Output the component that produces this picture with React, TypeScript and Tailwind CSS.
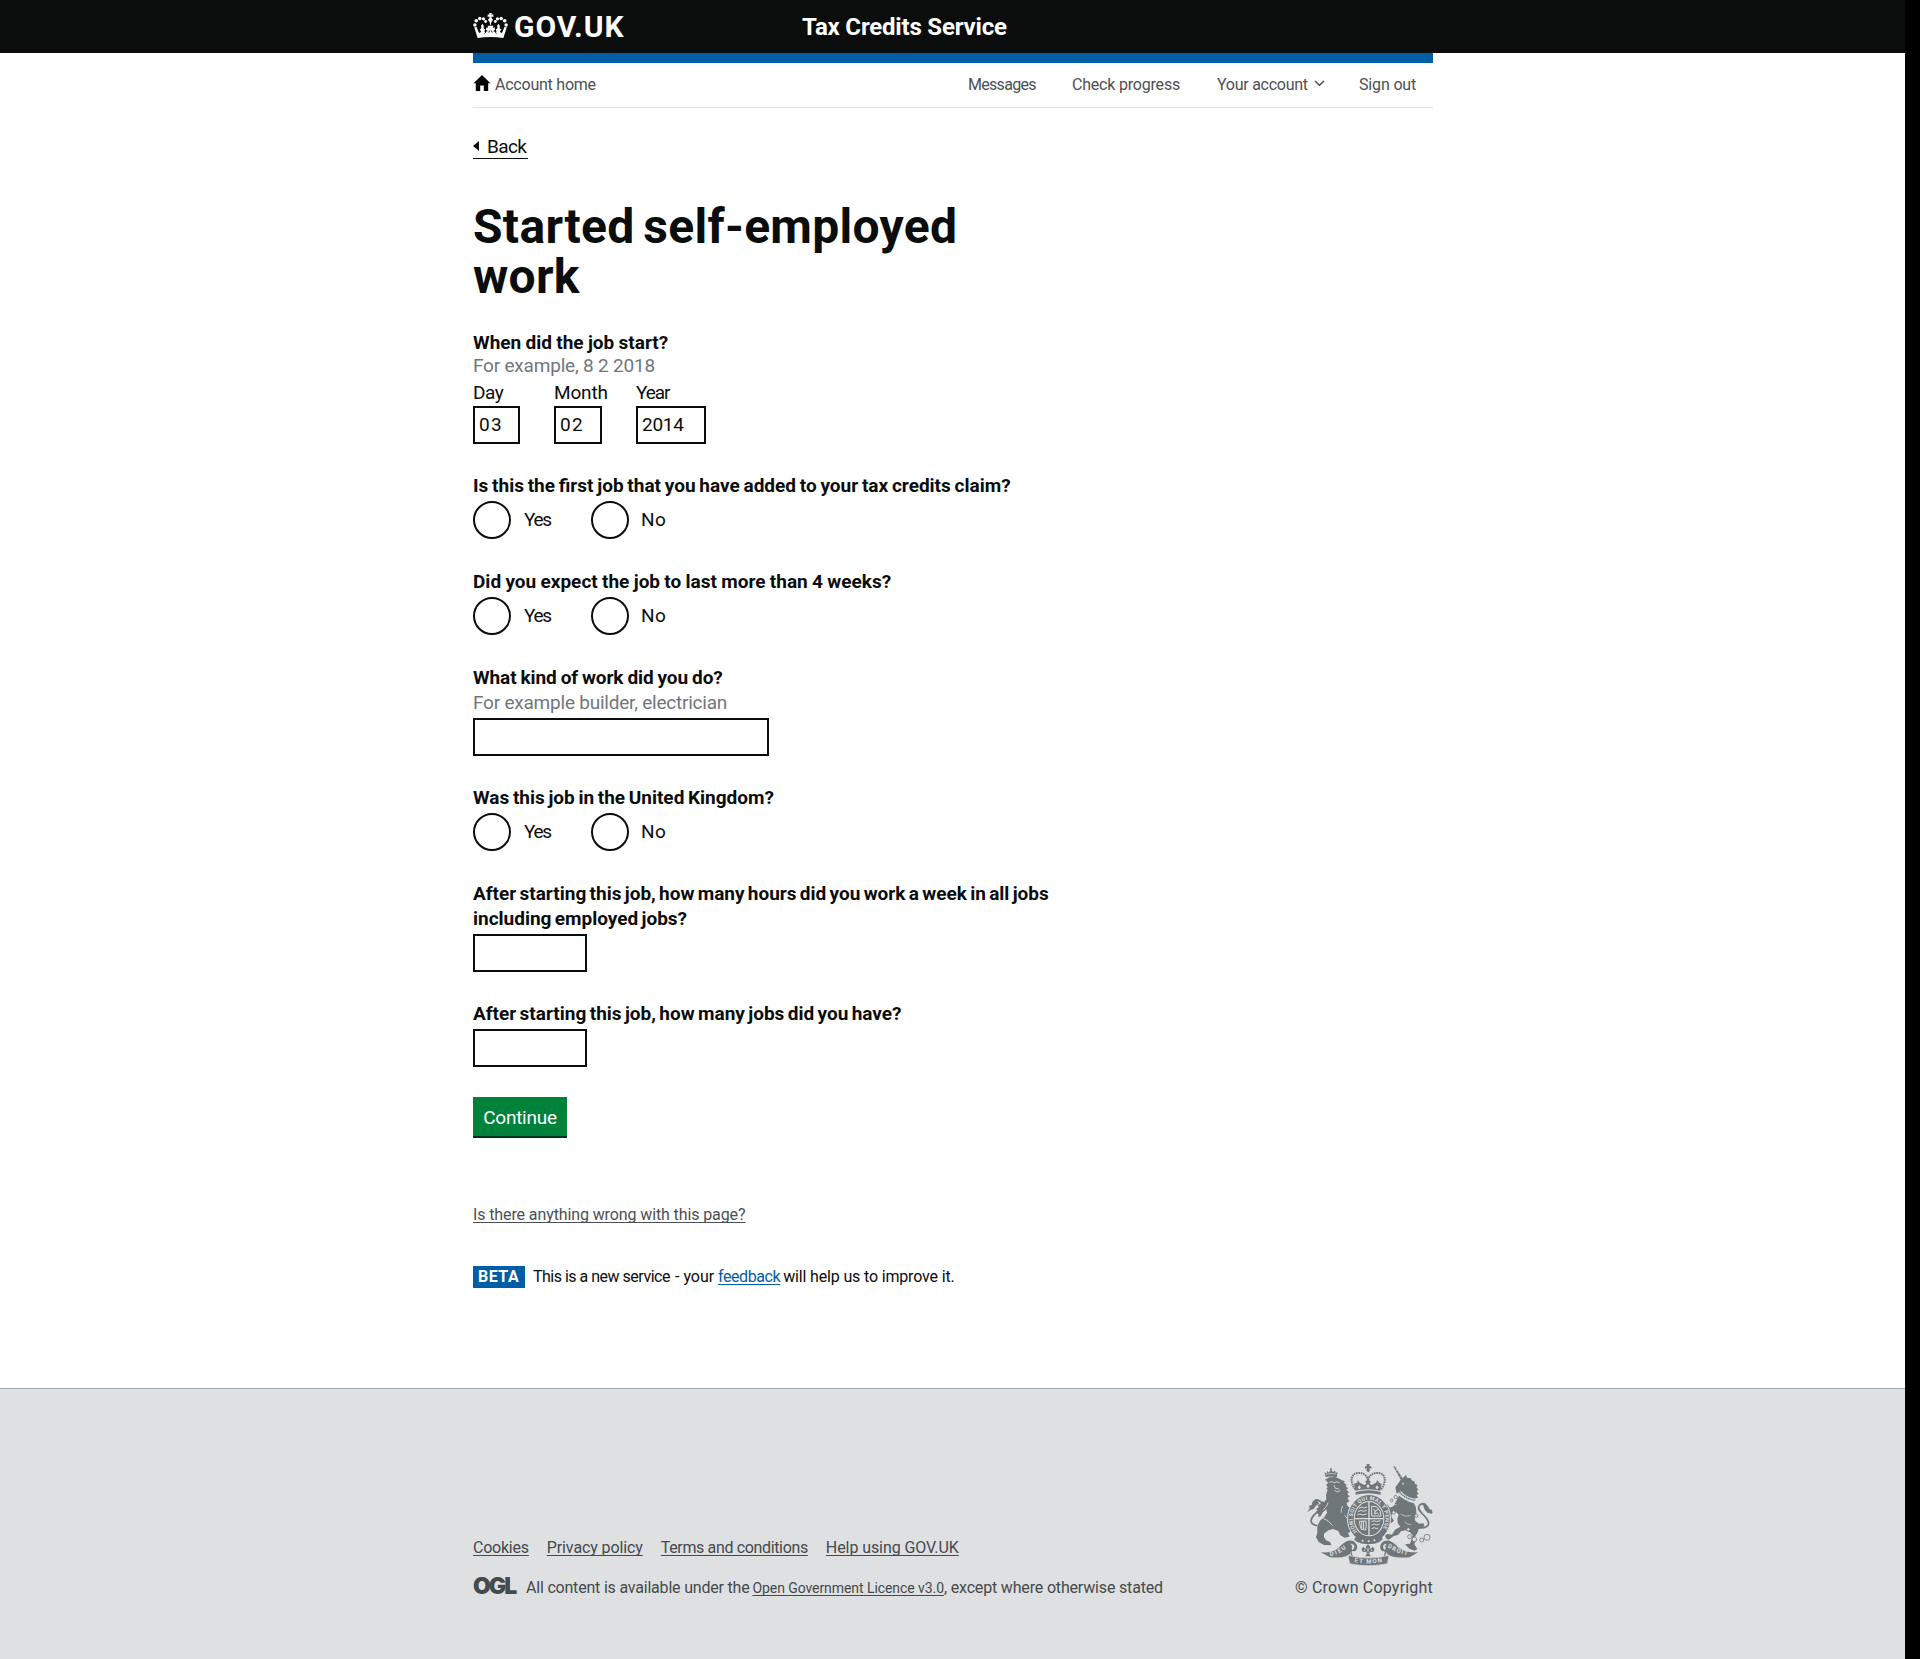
import type { ReactNode } from 'react';

function HeaderCrown() {
  return (
    <svg className="mt-[13px] h-[25px] w-[35px] shrink-0" viewBox="0 0 34 25" preserveAspectRatio="none" fill="#fff">
      <path d="M15.7 0h2.6l-.5 1.7 1.9-.5v2.7l-1.9-.5.4 1.8 1.3 1.5-1.7 2.6-.8 3.6-.8-3.6-1.7-2.6 1.3-1.5.4-1.8-1.9.5V1.2l1.9.5z" />
      <circle cx="1.8" cy="12" r="1.7" />
      <circle cx="3.2" cy="7.8" r="1.8" />
      <circle cx="6.6" cy="5.5" r="1.7" />
      <circle cx="10.2" cy="5.8" r="1.6" />
      <circle cx="12.3" cy="8.5" r="1.4" />
      <circle cx="32.2" cy="12" r="1.7" />
      <circle cx="30.8" cy="7.8" r="1.8" />
      <circle cx="27.4" cy="5.5" r="1.7" />
      <circle cx="23.8" cy="5.8" r="1.6" />
      <circle cx="21.7" cy="8.5" r="1.4" />
      <path d="M1.200 14.200l2.300-.2 2.300 6.100 2.200-1-1.400-2.700 1.500-1.100-.2-2.500 1.300-2 1.300 2-.2 2.500 1.600 1.100-.9 2.300 1.600.4 1.700-1-1.700-1.300.4-2.600 1.800.9-.6-2.300h5.600l-.6 2.300 1.800-.9.4 2.600-1.700 1.300 1.700 1 1.600-.4-.9-2.300 1.600-1.100-.2-2.500 1.300-2 1.300 2-.2 2.500 1.500 1.100L26 19.100l2.200 1 2.300-6.100 2.300.2L29.500 25C21.500 23.700 12.500 23.700 4.500 25z" />
      <path d="M15.300 19.600l.9-2.100M18.700 19.600l-.9-2.100M11 20.600l1.500-1.600M23 20.600l-1.500-1.600" fill="none" stroke="#0b0c0c" strokeWidth=".9" />
    </svg>
  );
}

function RoyalArms() {
  return (
    <svg className="h-[102px] w-[126px]" viewBox="83 42 378 306" fill="#6f777b" fontFamily="Roboto, sans-serif">
      <defs>
        <path id="garter" d="M234 245A49 56 0 1 1 304 245" />
        <path id="dieu" d="M153 318Q184 313 208 288" />
        <path id="mon" d="M225 336Q268 345 311 335" />
        <path id="droit" d="M324 291Q350 311 392 317" />
      </defs>

      {/* central crown */}
      <path d="M262 42h9l-1 7 6-1v8l-6-1 2 7-5 5-6-5 2-7-6 1v-8l6 1z" />
      <g fill="none" stroke="#6f777b" strokeWidth="6" strokeDasharray="5 2">
        <path d="M228 118C211 96 213 72 235 69c18-2 30 9 31 23" />
        <path d="M305 118c17-22 15-46-7-49-18-2-31 9-32 23" />
      </g>
      <path d="M224 101l9-3 3-8 5 8 7 3 7 4 6-4-3-7 8-5 8 5-3 7 6 4 7-4 6-3 5-8 4 8 8 3-4 21q-38-9-75 0z" />
      <path d="M229 126q38-10 75 0v8q-37-9-75 0z" />
      <path d="M240 106l5 7-5 5-5-5zM293 106l5 7-5 5-5-5zM266 102l5 7-5 6-5-6z" fill="#dee0e2" />

      {/* lion */}
      <path d="M139 81l-4-15 6 5 3-8 5 5 6-10 6 9 6-6 2 8 6-3-3 16q-17-5-33-1z" />
      <circle cx="155" cy="58" r="3" />
      <path d="M141 73q14-5 29-1" stroke="#dee0e2" strokeWidth="2" fill="none" />
      <path d="M136 90l14-8 18-1 12 5 7 5 9 2-2 6 8 5-3 5 7 6-5 4 8 8-5 4 7 9-7 3 6 11-8 4 2 9 8 8 12 9 2 13-7 5-1 14 3 18-5 11-10 3 5 12-15 3-13-7-6-13-16-6-14 4-13 10 0 11 6 9 13 6 3 9-22-1-16-9-8-14 4-14 0-20 8-16 13-11 8-13-2-10-10 9-7 12-8 2 2-9-7-2 5-8-6-4 8-7-3-7 10-2 1-8 9 2 6-9-1-13 5-15-4-2 4-6-5-7 6-4-3-7z" />
      <path d="M150 97l9-2 5 4 9-4 8 4M164 106l4 9 11 2M166 121l8 5 9-5" fill="none" stroke="#dee0e2" strokeWidth="2.5" />
      <path d="M146 158q-2 12-14 21M196 196q6 10 14 13M132 205q16 6 28 22M190 168q-6 10-4 20" stroke="#dee0e2" strokeWidth="2.5" fill="none" />
      <path d="M113 227C90 222 92 208 105 194c16-15 27-24 20-37-5-8-15-8-19 0" fill="none" stroke="#6f777b" strokeWidth="5" />
      <path d="M84 187l7-12-2-8 8-1 2-10 8-8 11-1-3 8 5 5-11 8-6 9-10 3z" />

      {/* unicorn */}
      <path d="M341 47l6 3 25 37-6 5z" />
      <path d="M349 62l6-3M355 71l6-3M361 80l6-3" stroke="#dee0e2" strokeWidth="2" />
      <path d="M350 122l-2-10 12-17 6-9 9-6 5-6 3 9 12 2 1 5 11 5-2 5 10 6-4 5 6 8-5 4 6 9-6 2 4 10-8 0 0 8-14-3-16-8-12-13-6-2-8 5z" />
      <circle cx="371" cy="101" r="2.5" fill="#dee0e2" />
      <path d="M361 126q16 20 46 25" fill="none" stroke="#dee0e2" strokeWidth="9" />
      <path d="M361 127q16 19 46 24" fill="none" stroke="#6f777b" strokeWidth="5" strokeDasharray="4 2" />
      <path d="M359 137l14 10 18 9 13 4 6 13 1 16-5 14 2 10 11 8 13-1 4 9-18 7-2 9-10 17 2 11-3 10 9 14-8 5-16-6-13-13 15-2 4-12 4-14-8-8-14-6-13 3-8 10-15 5-13 10-8-3-4-9 7-5 14 2 9-15 16-9-8-10-1-14 4-12-7-7-13 4-2 9 8 12-8 7-10-8-4-16 5-7-13-6-10-13 6-8 14 2 8 10 10-4z" />
      <path d="M364 192q12 10 30 5M376 216q8 8 20 8M338 165l14-2" fill="none" stroke="#dee0e2" strokeWidth="2" />
      <path d="M414 232c30 6 40-8 29-25-13-18-30-26-24-39 5-10 18-7 19 1 1 9 9 15 20 12" fill="none" stroke="#6f777b" strokeWidth="5" />
      <path d="M429 158l9 2 7 8 8 12 7 6-2 5-14-3-8-9z" />
      <g fill="#dee0e2" stroke="#6f777b" strokeWidth="2.5">
        <circle cx="349" cy="141" r="5" />
        <circle cx="337" cy="151" r="4" />
        <circle cx="343" cy="187" r="5" />
        <circle cx="411" cy="197" r="5" />
        <circle cx="387" cy="238" r="5" />
        <circle cx="391" cy="260" r="6" />
        <circle cx="405" cy="268" r="7" />
        <circle cx="427" cy="270" r="6" />
        <circle cx="443" cy="262" r="9" />
      </g>

      {/* garter and shield */}
      <ellipse cx="269" cy="206" rx="66" ry="74" fill="#dee0e2" />
      <ellipse cx="269" cy="206" rx="63" ry="71" />
      <text fontSize="16" fontWeight="700" fill="#dee0e2">
        <textPath href="#garter" textLength="238">HONI SOIT QUI MAL Y PENSE</textPath>
      </text>
      <ellipse cx="269" cy="206" rx="46" ry="53" fill="#dee0e2" />
      <ellipse cx="269" cy="206" rx="43" ry="50" />
      <path d="M269 156v100M226 206h86" stroke="#dee0e2" strokeWidth="4" />
      <g fill="none" stroke="#dee0e2" strokeWidth="3">
        <path d="M239 175l8-4 6 3 10-3M236 185l9-4 7 3 10-3M234 195l8-3 8 3 12-3" />
        <path d="M277 215l8-3 6 3 12-3M277 225l8-3 6 3 10-3M277 236l8-3 6 3 6-2" />
        <path d="M277 169l14 1 11 13 3 15h-28zM283 177l5 6-3 9 9-3 5 5M285 186l12-9" />
        <path d="M240 214q2 15 6 24l13 2q3-15 1-27zM247 214v22M253 214v23" />
      </g>
      <path d="M232 259q36 26 75-1l3 10q-12 14-36 14h-16q-24-1-34-14z" />
      <g fill="#dee0e2">
        <circle cx="250" cy="272" r="3" />
        <circle cx="268" cy="274" r="3" />
        <circle cx="285" cy="271" r="3" />
      </g>

      {/* scroll and plant badge */}
      <path d="M124 307q35 3 54-14 15-17 28-21 18-3 26 12 5 12-5 20l-11-1q-6 24-64 19z" />
      <path d="M416 307q-37 1-58-14-15-17-28-21-18-3-26 12-5 12 5 20l10-1q7 24 72 19z" />
      <path d="M213 281q10-1 12 8 1 7-6 12-5-6 0-13zM323 281q-10-1-12 8-1 7 6 12 5-6 0-13z" fill="#dee0e2" />
      <path d="M206 316q62 16 123 0l-5 25q-56 12-113 0z" stroke="#dee0e2" strokeWidth="2" />
      <path d="M217 300q-5 8 2 17M315 300q7 8 0 17" fill="none" stroke="#6f777b" strokeWidth="4" />
      <path d="M266 282l7 9-3 7 10-7 6 7-5 8-9-1-3 6 6 8h-18l6-8-3-6-9 1-5-8 6-7 10 7-3-7z" />
      <path d="M266 290l2 9-2 12-2-12zM276 297l4 3-5 3zM256 297l-4 3 5 3z" fill="#dee0e2" />
      <g fontSize="18" fontWeight="700" fill="#dee0e2">
        <text><textPath href="#dieu" textLength="54">DIEU</textPath></text>
        <text><textPath href="#mon" textLength="84">ET MON</textPath></text>
        <text><textPath href="#droit" textLength="66">DROIT</textPath></text>
      </g>
    </svg>
  );
}

function Radios() {
  return (
    <div className="mt-[3px] mb-[30px] flex h-[38px]">
      <span className="size-[38px] rounded-full border-2 border-[#0b0c0c] bg-white" />
      <span className="mt-[7px] ml-[13px] w-[67px] leading-[23px] tracking-[-1.3px]">Yes</span>
      <span className="size-[38px] rounded-full border-2 border-[#0b0c0c] bg-white" />
      <span className="mt-[7px] ml-[12px] leading-[23px] tracking-[0.5px]">No</span>
    </div>
  );
}

function Question({ spacing, children }: { spacing: string; children: ReactNode }) {
  return <div className={`font-bold leading-[25px] ${spacing}`}>{children}</div>;
}

type DateFieldProps = { label: string; value: string; box: string; track: string; valueTrack: string };

function DateField({ label, value, box, track, valueTrack }: DateFieldProps) {
  return (
    <div>
      <div className={`leading-[23px] ${track}`}>{label}</div>
      <div className={`mt-[2px] h-[38px] border-2 border-[#0b0c0c] pt-[5px] pl-[4px] leading-[23px] ${box} ${valueTrack}`}>{value}</div>
    </div>
  );
}

const link = 'underline decoration-1 underline-offset-[2px] [text-decoration-skip-ink:none]';

export default function App() {
  return (
    <div className="min-h-[1659px] bg-black font-['Roboto',sans-serif] text-[19px] text-[#0b0c0c]">
      <div className="h-[1659px] w-[1905px] bg-white">
        <header className="h-[53px] bg-[#0b0c0c] text-white">
          <div className="ml-[473px] flex w-[960px] items-start">
            <div className="flex w-[329px]">
              <HeaderCrown />
              <span className="mt-[9px] ml-[6px] text-[30px] leading-[35px] font-bold tracking-[0.95px]">GOV.UK</span>
            </div>
            <span className="mt-[13px] text-[24px] leading-[28px] font-bold tracking-[-0.19px]">Tax Credits Service</span>
          </div>
        </header>

        <div className="ml-[473px] w-[960px]">
          <div className="h-[10px] bg-[#005ea5]" />
          <nav className="flex h-[45px] border-b border-[#dee0e2] pt-[12px] text-[16px] leading-[19px] text-[#4c5054]">
            <div className="flex w-[495px]">
              <svg className="h-[16px] w-[18px]" viewBox="0 0 18 16" fill="#000">
                <path d="M9 0l8.5 8.3h-2.3V16h-4.4v-5.6H7.2V16H2.8V8.3H.5z" />
              </svg>
              <span className="ml-[4px] tracking-[-0.23px]">Account home</span>
            </div>
            <span className="w-[104px] tracking-[-0.7px]">Messages</span>
            <span className="w-[145px] tracking-[-0.2px]">Check progress</span>
            <span className="flex w-[142px] tracking-[-0.26px]">
              Your account
              <svg className="mt-[5px] ml-[6px] h-[7px] w-[11px]" viewBox="0 0 11 7" fill="none" stroke="#4c5054" strokeWidth="1.5">
                <path d="M1 1l4.500 4.300L10 1" />
              </svg>
            </span>
            <span className="tracking-[-0.16px]">Sign out</span>
          </nav>

          <div className="mt-[27px] flex h-[24px] w-[55px] border-b border-[#0b0c0c] leading-[23px]">
            <svg className="mt-[6px] h-[10px] w-[6px]" viewBox="0 0 6 10" fill="#0b0c0c">
              <path d="M6 0v10L0 5z" />
            </svg>
            <span className="ml-[8px] tracking-[-0.6px]">Back</span>
          </div>

          <h1 className="mt-[43px] w-[520px] text-[48px] leading-[50px] font-bold tracking-[0.3px] [word-spacing:-3.5px]">Started self-employed work</h1>

          <div className="mt-[29px] leading-[23px] font-bold [word-spacing:-0.4px]">When did the job start?</div>
          <div className="leading-[23px] tracking-[-0.2px] text-[#6f777b]">For example, 8 2 2018</div>
          <div className="mt-[4px] mb-[29px] flex">
            <div className="w-[81px]">
              <DateField label="Day" value="03" box="w-[47px]" track="tracking-[-0.5px]" valueTrack="tracking-[1.2px]" />
            </div>
            <div className="w-[82px]">
              <DateField label="Month" value="02" box="w-[48px]" track="tracking-[-0.15px]" valueTrack="tracking-[1.2px]" />
            </div>
            <DateField label="Year" value="2014" box="w-[70px]" track="tracking-[-1.1px]" valueTrack="tracking-[-0.3px]" />
          </div>

          <Question spacing="[word-spacing:-0.97px]">Is this the first job that you have added to your tax credits claim?</Question>
          <Radios />
          <Question spacing="[word-spacing:-0.4px]">Did you expect the job to last more than 4 weeks?</Question>
          <Radios />
          <Question spacing="tracking-[-0.1px] [word-spacing:-0.6px]">What kind of work did you do?</Question>
          <div className="leading-[25px] tracking-[-0.22px] text-[#6f777b]">For example builder, electrician</div>
          <div className="mt-[3px] mb-[29px] h-[38px] w-[296px] border-2 border-[#0b0c0c]" />
          <Question spacing="[word-spacing:-1.07px]">Was this job in the United Kingdom?</Question>
          <Radios />
          <Question spacing="[word-spacing:-1.42px]">
            After starting this job, how many hours did you work a week in all jobs
            <br />
            including employed jobs?
          </Question>
          <div className="mt-[3px] mb-[29px] h-[38px] w-[114px] border-2 border-[#0b0c0c]" />
          <Question spacing="[word-spacing:-1.35px]">After starting this job, how many jobs did you have?</Question>
          <div className="mt-[3px] mb-[30px] h-[38px] w-[114px] border-2 border-[#0b0c0c]" />

          <button className="block h-[39px] w-[94px] bg-[#00823b] pt-[1px] text-[19px] leading-[23px] tracking-[-0.25px] text-white shadow-[0_2px_0_#003618]">Continue</button>

          <div className="mt-[69px] text-[16px] leading-[19px] text-[#4c5054]">
            <a className={`${link} tracking-[-0.11px]`}>Is there anything wrong with this page?</a>
          </div>

          <div className="mt-[42px] flex h-[22px] pt-px text-[16px] leading-[19px]">
            <span className="-mt-px h-[22px] w-[52px] bg-[#005ea5] pt-px pl-[5px] font-bold tracking-[0.5px] text-white">BETA</span>
            <span className="ml-[8px] w-[142px] tracking-[-0.5px]">This is a new service</span>
            <span className="w-[43px] tracking-[0px]">- your</span>
            <a className={`${link} tracking-[-0.42px] text-[#005ea5]`}>feedback</a>
            <span className="ml-[3px] tracking-[-0.16px]">will help us to improve it.</span>
          </div>
        </div>

        <footer className="mt-[100px] h-[271px] border-t border-[#a1acb2] bg-[#dee0e2] text-[16px] leading-[19px] text-[#454a4d]">
          <div className="ml-[473px] flex w-[960px] justify-between">
            <div className="pt-[149px]">
              <div className="flex">
                <a className={`${link} mr-[18px] tracking-[-0.23px]`}>Cookies</a>
                <a className={`${link} mr-[18px] tracking-[-0.11px]`}>Privacy policy</a>
                <a className={`${link} mr-[18px] tracking-[-0.35px]`}>Terms and conditions</a>
                <a className={`${link} tracking-[-0.08px]`}>Help using GOV.UK</a>
              </div>
              <div className="mt-[21px] flex">
                <span className="w-[53px] font-['Inter',sans-serif] text-[23px] leading-[17px] font-black tracking-[-2px]">OGL</span>
                <span className="tracking-[-0.2px]">All content is available under the</span>
                <a className={`${link} mt-px ml-[3px] text-[14px] tracking-[-0.07px]`}>Open Government Licence v3.0</a>
                <span className="tracking-[-0.17px]">, except where otherwise stated</span>
              </div>
            </div>
            <div className="flex flex-col items-end pt-[75px]">
              <RoyalArms />
              <span className="mt-[12px] tracking-[0.2px]">© Crown Copyright</span>
            </div>
          </div>
        </footer>
      </div>
    </div>
  );
}
